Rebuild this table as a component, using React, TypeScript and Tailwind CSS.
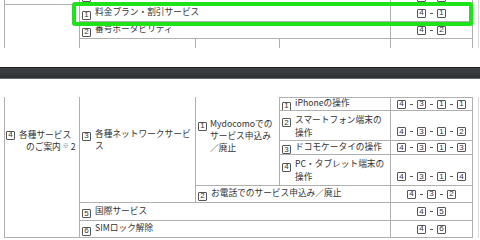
import React from 'react';

function Num({ n }: { n: string }) {
  return (
    <span className="inline-flex h-[9px] w-[9px] shrink-0 items-center justify-center rounded-[1px] border border-[#555] font-['Liberation_Sans',sans-serif] text-[8px] leading-none text-[#333]">
      {n}
    </span>
  );
}

function Code({ parts }: { parts: string[] }) {
  return (
    <span className="inline-flex items-center">
      {parts.map((p, i) => (
        <React.Fragment key={i}>
          {i > 0 && <span className="mx-[4px] h-px w-[3px] bg-[#555]" />}
          <Num n={p} />
        </React.Fragment>
      ))}
    </span>
  );
}

function Item({ n, lines }: { n: string; lines: React.ReactNode[] }) {
  return (
    <div className="flex items-start">
      <span className="mt-[2px]">
        <Num n={n} />
      </span>
      <div className="ml-[4px] leading-[13px] whitespace-nowrap">
        {lines.map((l, i) => (
          <div key={i}>{l}</div>
        ))}
      </div>
    </div>
  );
}

const line = 'border-[#b0b0b0]';

export default function App() {
  return (
    <div className="relative h-[240px] w-[480px] overflow-hidden bg-white font-['Noto_Sans_CJK_JP',sans-serif] text-[8.7px] text-[#333]">
      {/* top crop */}
      <div className="flex h-[48px] overflow-hidden">
        <div
          className={`-mt-[10px] ml-[4px] grid h-[68px] grid-cols-[75px_116px_84px_111px_82px] grid-rows-[14px_17px_17px_20px] border-r ${line}`}
        >
          <div className={`col-start-1 row-start-1 border-l ${line}`} />
          <div className={`col-span-3 col-start-2 row-start-1 flex items-center border-l pl-[2px] ${line}`}>
            <Num n="" />
          </div>
          <div className={`col-start-5 row-start-1 flex items-center justify-center border-l ${line}`}>
            <Code parts={['', '']} />
          </div>

          <div className={`col-start-1 row-span-3 row-start-2 border-t border-l ${line}`} />
          <div className={`col-span-3 col-start-2 row-start-2 flex items-center border-t border-l pl-[2px] ${line}`}>
            <Item n="1" lines={['料金プラン・割引サービス']} />
          </div>
          <div className={`col-start-5 row-start-2 flex items-center justify-center border-t border-l ${line}`}>
            <Code parts={['4', '1']} />
          </div>

          <div className={`col-span-3 col-start-2 row-start-3 flex items-center border-t border-l pl-[2px] ${line}`}>
            <Item n="2" lines={['番号ポータビリティ']} />
          </div>
          <div className={`col-start-5 row-start-3 flex items-center justify-center border-t border-l ${line}`}>
            <Code parts={['4', '2']} />
          </div>

          <div className={`col-start-2 row-start-4 border-t border-l ${line}`} />
          <div className={`col-start-3 row-start-4 border-t border-l ${line}`} />
          <div className={`col-start-4 row-start-4 border-t border-l ${line}`} />
          <div className={`col-start-5 row-start-4 border-t border-l ${line}`} />
        </div>
        <div className="ml-[5px] w-px bg-[#d8d8d8]" />
      </div>

      <div className="h-[19px]" />

      {/* dark divider bar */}
      <div className="h-[12px] border-t border-b border-t-[#1c1e20] border-b-[#66686a] bg-gradient-to-b from-[#3e4245] to-[#2e3134]" />

      <div className="h-[18px]" />

      {/* bottom crop */}
      <div className="flex">
        <div
          className={`ml-[4px] grid grid-cols-[75px_116px_84px_111px_82px] grid-rows-[13px_30px_14px_31px_17px_18px_17px] border-r border-b ${line}`}
        >
          <div className={`col-start-1 row-span-7 row-start-1 border-l pt-[32px] pl-[1px] leading-[12px] whitespace-nowrap ${line}`}>
            <div className="flex items-center">
              <Num n="4" />
              <span className="ml-[4px]">各種サービス</span>
            </div>
            <div className="pl-[20px]">
              のご案内 <span className="relative -top-[2px] text-[6px] text-[#777]">※</span> 2
            </div>
          </div>

          <div className={`col-start-2 row-span-5 row-start-1 border-l pt-[31px] pl-[2px] ${line}`}>
            <div className="flex items-start leading-[12px] whitespace-nowrap">
              <span className="mt-[1px]">
                <Num n="3" />
              </span>
              <div className="ml-[4px]">
                <div>各種ネットワークサービ</div>
                <div>ス</div>
              </div>
            </div>
          </div>

          <div className={`col-start-3 row-span-4 row-start-1 border-l pt-[21px] pl-[2px] ${line}`}>
            <div className="flex items-start leading-[12px] whitespace-nowrap">
              <span className="mt-[1px]">
                <Num n="1" />
              </span>
              <div className="ml-[3px]">
                <div>Mydocomoでの</div>
                <div>サービス申込み</div>
                <div>／廃止</div>
              </div>
            </div>
          </div>

          <div className={`col-start-4 row-start-1 flex items-center border-t border-l pl-[2px] ${line}`}>
            <Item n="1" lines={['iPhoneの操作']} />
          </div>
          <div className={`col-start-5 row-start-1 flex items-center justify-center border-t border-l ${line}`}>
            <Code parts={['4', '3', '1', '1']} />
          </div>

          <div className={`col-start-4 row-start-2 flex items-center border-t border-l pl-[2px] ${line}`}>
            <Item n="2" lines={['スマートフォン端末の', '操作']} />
          </div>
          <div className={`col-start-5 row-start-2 flex items-end justify-center border-t border-l pb-[4px] ${line}`}>
            <Code parts={['4', '3', '1', '2']} />
          </div>

          <div className={`col-start-4 row-start-3 flex items-center border-t border-l pl-[2px] ${line}`}>
            <Item n="3" lines={['ドコモケータイの操作']} />
          </div>
          <div className={`col-start-5 row-start-3 flex items-center justify-center border-t border-l ${line}`}>
            <Code parts={['4', '3', '1', '3']} />
          </div>

          <div className={`col-start-4 row-start-4 flex items-center border-t border-l pl-[2px] ${line}`}>
            <Item n="4" lines={['PC・タブレット端末の', '操作']} />
          </div>
          <div className={`col-start-5 row-start-4 flex items-end justify-center border-t border-l pb-[4px] ${line}`}>
            <Code parts={['4', '3', '1', '4']} />
          </div>

          <div className={`col-span-2 col-start-3 row-start-5 flex items-center border-t border-l pl-[2px] ${line}`}>
            <Item n="2" lines={['お電話でのサービス申込み／廃止']} />
          </div>
          <div className={`col-start-5 row-start-5 flex items-center justify-center border-t border-l ${line}`}>
            <Code parts={['4', '3', '2']} />
          </div>

          <div className={`col-span-3 col-start-2 row-start-6 flex items-center border-t border-l pl-[2px] ${line}`}>
            <Item n="5" lines={['国際サービス']} />
          </div>
          <div className={`col-start-5 row-start-6 flex items-center justify-center border-t border-l ${line}`}>
            <Code parts={['4', '5']} />
          </div>

          <div className={`col-span-3 col-start-2 row-start-7 flex items-center border-t border-l pl-[2px] ${line}`}>
            <Item n="6" lines={['SIMロック解除']} />
          </div>
          <div className={`col-start-5 row-start-7 flex items-center justify-center border-t border-l ${line}`}>
            <Code parts={['4', '6']} />
          </div>
        </div>
        <div className="ml-[5px] w-px bg-[#d8d8d8]" />
      </div>

      {/* highlight annotation */}
      <div className="absolute top-[2px] left-[72px] h-[24px] w-[401px] rounded-[3px] border-4 border-[#1fe31a]" />
    </div>
  );
}
